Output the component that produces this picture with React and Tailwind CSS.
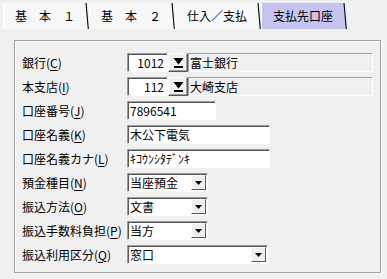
import React from 'react';

const FONT = "font-['Noto_Sans_CJK_JP','Noto_Sans',sans-serif]";

function Tab({ label, active = false }) {
  const fill = active ? '#c4c4ee' : '#f7f7f7';
  return (
    <div className="flex h-[26px]">
      <div
        className={`flex h-full w-[82px] items-center border-l border-white pl-[11px] text-[12px] leading-none text-black ${active ? 'bg-[#c4c4ee]' : 'bg-[#f7f7f7]'}`}
      >
        {label}
      </div>
      <svg width="4" height="26" viewBox="0 0 4 26" className="shrink-0">
        <polygon points="0,0 1,0 3.6,26 0,26" fill={fill} />
        <line x1="1" y1="0" x2="3.3" y2="26" stroke="#000" strokeWidth="1.1" />
      </svg>
    </div>
  );
}

function Label({ text, k, rest = '' }) {
  return (
    <div className="w-[105px] shrink-0 whitespace-nowrap text-[12px] leading-none text-black">
      {text}(<span className="underline underline-offset-[2px]">{k}</span>){rest}
    </div>
  );
}

const sunken =
  'border border-t-[#9a9a9a] border-l-[#9a9a9a] border-b-white border-r-white bg-white shadow-[inset_1px_1px_0_#5a5a5a]';

function Field({ w, value, right = false }) {
  return (
    <div
      className={`${sunken} flex h-[19px] items-center px-[2px] text-[12px] leading-none text-black ${right ? 'justify-end pr-[3px]' : ''}`}
      style={{ width: w }}
    >
      {value}
    </div>
  );
}

function DropButton() {
  return (
    <div className="flex h-[19px] w-[20px] items-center justify-center border border-t-white border-l-white border-b-[#5a5a5a] border-r-[#5a5a5a] bg-[#f0f0f0] shadow-[inset_-1px_-1px_0_#a0a0a0]">
      <svg width="11" height="12" viewBox="0 0 11 12">
        <polygon points="0.5,1 10.5,1 5.5,7.5" fill="#000" />
        <rect x="1" y="9" width="9" height="2" fill="#000" />
      </svg>
    </div>
  );
}

function NameBox({ value }) {
  return (
    <div className="flex h-[19px] w-[185px] items-center border border-t-[#a0a0a0] border-l-[#a0a0a0] border-b-white border-r-white bg-[#f0f0f0] pl-[1px] text-[12px] leading-none text-black">
      {value}
    </div>
  );
}

function Select({ w, value }) {
  return (
    <div className={`${sunken} flex h-[19px] items-center justify-between pl-[2px] pr-[1px]`} style={{ width: w }}>
      <span className="text-[12px] leading-none text-black">{value}</span>
      <div className="flex h-[15px] w-[15px] items-center justify-center border border-t-white border-l-white border-b-[#5a5a5a] border-r-[#5a5a5a] bg-[#f0f0f0]">
        <svg width="7" height="4" viewBox="0 0 7 4">
          <polygon points="0,0 7,0 3.5,4" fill="#000" />
        </svg>
      </div>
    </div>
  );
}

function Row({ children }) {
  return <div className="flex h-[19px] items-center">{children}</div>;
}

export default function App() {
  return (
    <div className={`h-[279px] w-[387px] overflow-hidden bg-[#f0f0f0] ${FONT}`}>
      <div className="flex pl-[3px] pt-[3px]">
        <Tab label="基　本　１" />
        <Tab label="基　本　２" />
        <Tab label="仕入／支払" />
        <Tab label="支払先口座" active />
      </div>

      <div className="ml-[14px] mt-[11px] h-[233px] w-[367px] border border-[#a0a0a0] shadow-[1px_1px_0_#ffffff,inset_1px_1px_0_#ffffff]">
        <div className="flex flex-col gap-[5px] pl-[7px] pt-[12px]">
          <Row>
            <Label text="銀行" k="C" />
            <Field w={41} value="1012" right />
            <DropButton />
            <NameBox value="富士銀行" />
          </Row>
          <Row>
            <Label text="本支店" k="I" />
            <Field w={41} value="112" right />
            <DropButton />
            <NameBox value="大崎支店" />
          </Row>
          <Row>
            <Label text="口座番号" k="J" />
            <Field w={89} value="7896541" />
          </Row>
          <Row>
            <Label text="口座名義" k="K" />
            <Field w={143} value="木公下電気" />
          </Row>
          <Row>
            <Label text="口座名義カナ" k="L" />
            <Field w={143} value="ｷｺｳﾝｼﾀﾃﾞﾝｷ" />
          </Row>
          <Row>
            <Label text="預金種目" k="N" />
            <Select w={81} value="当座預金" />
          </Row>
          <Row>
            <Label text="振込方法" k="O" />
            <Select w={81} value="文書" />
          </Row>
          <Row>
            <Label text="振込手数料負担" k="P" />
            <Select w={81} value="当方" />
          </Row>
          <Row>
            <Label text="振込利用区分" k="Q" />
            <Select w={141} value="窓口" />
          </Row>
        </div>
      </div>
    </div>
  );
}
